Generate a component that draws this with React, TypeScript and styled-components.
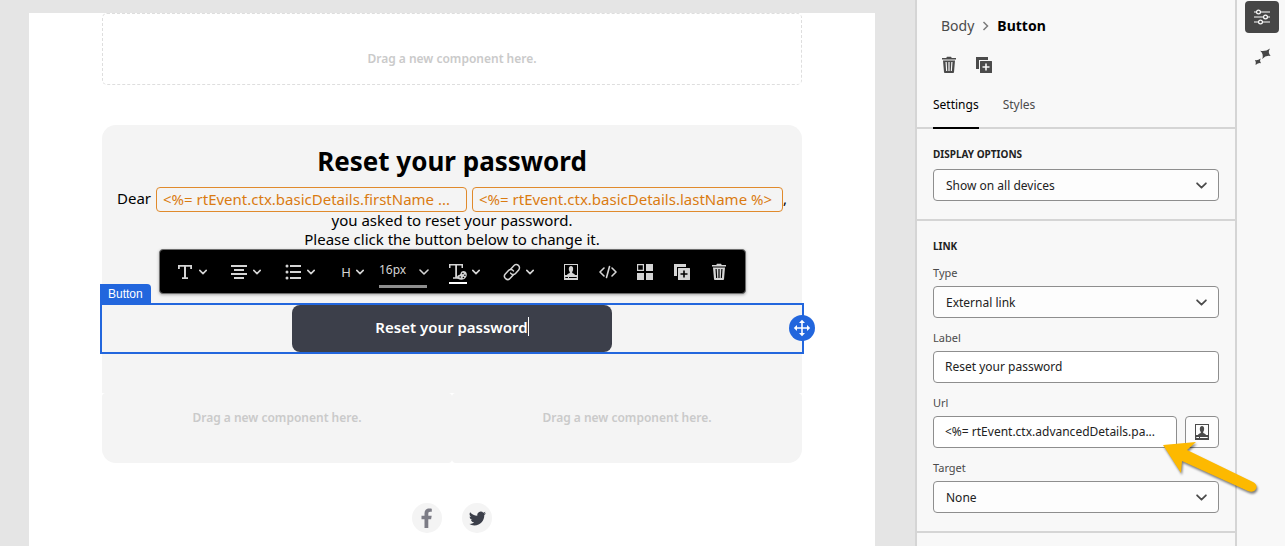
import React from 'react';
import styled, { createGlobalStyle, css } from 'styled-components';

const BLUE = '#2266dd';
const UI_FONT = '"Noto Sans", "Open Sans", sans-serif';

const GlobalStyle = createGlobalStyle`
  *, *::before, *::after { box-sizing: border-box; }
  body { margin: 0; background: #e6e6e6; font-family: ${UI_FONT}; }
  button, input, select { font-family: inherit; margin: 0; }
  h1, h2, p { margin: 0; }
`;

const Shell = styled.div`
  display: flex;
  height: 100vh;
  overflow: hidden;
`;

const Canvas = styled.main`
  flex: 1;
  min-width: 0;
  padding: 13px 40px 0 29px;
  background: #e5e5e5;
`;

const EmailPage = styled.div`
  display: flex;
  flex-direction: column;
  align-items: center;
  min-height: 100%;
  background: #fff;
`;

const EmailBody = styled.div`
  width: 100%;
  max-width: 700px;
`;

const placeholderText = css`
  display: flex;
  justify-content: center;
  font-size: 12px;
  line-height: 18px;
  font-weight: 600;
  color: #cacaca;
`;

const DropZone = styled.div`
  ${placeholderText}
  height: 72px;
  padding-top: 36px;
  border: 1px dashed #dedede;
  border-radius: 5px;
`;

const Card = styled.section`
  height: 268px;
  margin-top: 40px;
  padding-top: 18px;
  background: #f4f4f4;
  border-radius: 14px 14px 0 0;
  text-align: center;
  color: #000;
`;

const Title = styled.h1`
  font-size: 26px;
  line-height: 36px;
  font-weight: 700;
`;

const Greeting = styled.p`
  display: flex;
  justify-content: center;
  height: 24px;
  margin-top: 8px;
  font-size: 15px;
  line-height: 23px;
  white-space: nowrap;
`;

const Token = styled.span`
  width: 311px;
  height: 25px;
  margin-left: 5px;
  padding: 0 6px;
  border: 1px solid #e08a2c;
  border-radius: 4px;
  color: #da7b11;
  text-align: left;
`;

const BodyText = styled.p`
  font-size: 15px;
  line-height: 19px;
`;

const Selection = styled.div`
  position: relative;
  display: flex;
  justify-content: center;
  height: 51px;
  margin: 54px -2px 0;
  border: 2px solid ${BLUE};
`;

const SelectionTag = styled.span`
  position: absolute;
  left: -2px;
  bottom: 100%;
  height: 21px;
  padding: 0 8px;
  border-radius: 0 4px 0 0;
  background: ${BLUE};
  color: #fff;
  font: 12px/21px "Liberation Sans", Arial, sans-serif;
`;

const MoveHandle = styled.button`
  position: absolute;
  right: -13px;
  top: 10px;
  width: 26px;
  height: 26px;
  padding: 0;
  border: 0;
  border-radius: 50%;
  background: ${BLUE};
  color: #fff;
  svg { display: block; }
`;

const CtaButton = styled.button`
  display: flex;
  align-items: center;
  justify-content: center;
  width: 320px;
  padding: 0 0 4px;
  border: 0;
  border-radius: 8px;
  background: #3c3f4a;
  color: #fff;
  font-size: 15px;
  line-height: 20px;
  font-weight: 600;
`;

const Caret = styled.span`
  width: 1px;
  height: 19px;
  background: #fff;
`;

const Toolbar = styled.div`
  position: absolute;
  left: 57px;
  bottom: 58px;
  display: flex;
  align-items: center;
  width: 587px;
  height: 45px;
  padding: 0 16px;
  border: 1px solid #6e6e6e;
  border-radius: 4px;
  background: #000;
  box-shadow: 0 1px 3px rgba(0, 0, 0, 0.3);
  color: #d4d4d4;
`;

const ToolGroup = styled.div<{ $gap: number; $after?: number }>`
  display: flex;
  align-items: center;
  gap: ${p => p.$gap}px;
  margin-right: ${p => p.$after ?? 0}px;
`;

const Tool = styled.button`
  display: flex;
  align-items: center;
  gap: 5px;
  padding: 0;
  border: 0;
  background: none;
  color: inherit;
  font-size: 13px;
  line-height: 18px;
  svg { display: block; }
`;

const HeadingGlyph = styled.span`
  width: 13px;
  text-align: right;
`;

const SizeTool = styled(Tool)`
  justify-content: space-between;
  width: 50px;
  color: #d4d4d4;
  font-size: 12px;
  line-height: 28px;
  background: linear-gradient(#8e8e8e, #8e8e8e) 0 100% / 48px 3px no-repeat;
  span { padding-bottom: 4px; }
`;

const Columns = styled.div`
  display: grid;
  grid-template-columns: 1fr 1fr;
`;

const Column = styled.div<{ $side: 'left' | 'right' }>`
  ${placeholderText}
  height: 70px;
  padding-top: 16px;
  background: #f4f4f4;
  border-radius: ${p => (p.$side === 'left' ? '4px 4px 4px 14px' : '4px 4px 14px 4px')};
`;

const Social = styled.nav`
  display: flex;
  justify-content: center;
  gap: 20px;
  margin-top: 40px;
`;

const SocialLink = styled.a`
  display: grid;
  place-items: center;
  width: 30px;
  height: 30px;
  border-radius: 50%;
  background: #f4f4f4;
`;

const Panel = styled.aside`
  position: relative;
  flex: 0 0 322px;
  border: solid #d5d5d5;
  border-width: 0 2px;
  background: #f8f8f8;
  color: #222;
`;

const Breadcrumb = styled.nav`
  display: flex;
  align-items: center;
  gap: 8px;
  padding: 15px 24px 0;
  font-size: 14px;
  line-height: 22px;
  color: #4b4b4b;
  a { color: inherit; text-decoration: none; }
  svg { color: #7a7a7a; }
  strong { color: #000; font-weight: 700; }
`;

const Actions = styled.div`
  display: flex;
  gap: 17px;
  padding: 19px 23px 0;
`;

const IconButton = styled.button`
  padding: 0;
  border: 0;
  background: none;
  color: #4b4b4b;
  svg { display: block; }
`;

const Tabs = styled.div`
  display: flex;
  gap: 24px;
  height: 55px;
  padding: 0 16px;
  border-bottom: 2px solid #d5d5d5;
`;

const Tab = styled.button<{ $active?: boolean }>`
  height: 55px;
  padding: 8px 0 0;
  border: 0;
  border-bottom: 2px solid ${p => (p.$active ? '#000' : 'transparent')};
  background: none;
  font-size: 12px;
  line-height: 18px;
  color: ${p => (p.$active ? '#000' : '#4b4b4b')};
`;

const Section = styled.section`
  padding: 17px 16px 18px;
  border-bottom: 2px solid #d5d5d5;
  display: flex;
  flex-direction: column;
`;

const SectionTitle = styled.h2`
  font-size: 10px;
  line-height: 16px;
  font-weight: 700;
  margin-bottom: 7px;
`;

const Field = styled.div`
  display: flex;
  flex-direction: column;
  & + & { margin-top: 8px; }
`;

const FieldLabel = styled.label`
  padding-top: 4px;
  font-size: 11px;
  line-height: 16px;
  margin-bottom: 5px;
  color: #4b4b4b;
`;

const SelectWrap = styled.div`
  display: grid;
  align-items: center;
  > * { grid-area: 1 / 1; }
  svg { justify-self: end; margin-right: 12px; pointer-events: none; color: #4b4b4b; }
`;

const control = css`
  width: 100%;
  min-width: 0;
  height: 32px;
  padding: 0 12px;
  border: 1px solid #8e8e8e;
  border-radius: 4px;
  background: #fdfdfd;
  color: #222;
  font-size: 12px;
`;

const Select = styled.select`
  ${control}
  appearance: none;
`;

const Input = styled.input`
  ${control}
  padding: 0 11px 2px;
  background: #fff;
  text-overflow: ellipsis;
`;

const InputRow = styled.div`
  display: flex;
  gap: 8px;
`;

const SquareButton = styled(IconButton)`
  display: grid;
  place-items: center;
  flex: 0 0 34px;
  height: 32px;
  border: 1px solid #8e8e8e;
  border-radius: 4px;
  background: #fdfdfd;
`;

const Rail = styled.nav`
  display: flex;
  flex-direction: column;
  align-items: center;
  flex: 0 0 48px;
  gap: 8px;
  padding: 1px 0 0 2px;
  background: #f8f8f8;
`;

const RailButton = styled.button<{ $active?: boolean }>`
  display: grid;
  place-items: center;
  width: 34px;
  height: 32px;
  padding: 0;
  border: 0;
  border-radius: 4px;
  background: ${p => (p.$active ? '#464646' : 'none')};
  color: ${p => (p.$active ? '#fff' : '#464646')};
`;

const Pointer = styled.svg`
  position: absolute;
  left: 240px;
  top: 436px;
  z-index: 2;
  overflow: visible;
  pointer-events: none;
  filter: drop-shadow(1px 2px 1px rgba(0, 0, 0, 0.5));
`;

const Icon = ({ children, size = 18 }: { children: React.ReactNode; size?: number }) => (
  <svg width={size} height={size} viewBox="0 0 18 18" fill="currentColor" aria-hidden="true">{children}</svg>
);

const Chevron = ({ width = 8 }: { width?: number }) => (
  <svg width={width} height={width} viewBox="0 0 10 10" fill="none" stroke="currentColor" strokeWidth={width > 8 ? 1.6 : 2} strokeLinecap="round" strokeLinejoin="round" aria-hidden="true">
    <path d="M1 3l4 4 4-4" />
  </svg>
);

const TrashIcon = () => (
  <Icon>
    <path fillRule="evenodd" d="M6.500 2V1.400Q6.500.8 7.100.8h3.800q.6 0 .6.6V2H16v1.500H2V2zM3 4.500h12l-1 11.700q-.1.8-.9.8H4.900q-.8 0-.9-.8zM5.500 6l.6 9h1.100L6.700 6zM8.400 6v9h1.200V6zM11.300 6l-.5 9h1.100l.6-9z" />
  </Icon>
);

const DuplicateIcon = () => (
  <Icon>
    <path d="M1 1h12v3H4v9H1z" />
    <path fillRule="evenodd" d="M5.500 5h11q.5 0 .5.5v11q0 .5-.5.500h-11q-.5 0-.5-.5v-11q0-.5.5-.5zM10.200 7.500v2.700H7.500v1.600h2.700v2.700h1.600v-2.700h2.700v-1.600h-2.700V7.500z" />
  </Icon>
);

const PersonalizeIcon = () => (
  <Icon>
    <path fillRule="evenodd" d="M2 1h14v16H2zM3 2v10h2c.2-1.300 2-1.500 2.800-2V9C6.500 7.500 6.200 3 9 3s2.500 4.500 1.200 6v1c.8.5 2.600.7 2.800 2h2V2zM3.300 14v1H6v-1zM7 14v1h7.700v-1z" />
  </Icon>
);

const TextIcon = () => <Icon><path d="M2 2h14v4h-1.800V3.800h-4.200v10.400h2V16H6v-1.800h2V3.800H3.800V6H2z" /></Icon>;

const AlignIcon = () => <Icon><path d="M1 2h16v2H1zM4 6h10v2H4zM1 10h16v2H1zM4 14h10v2H4z" /></Icon>;

const ListIcon = () => (
  <Icon>
    <path d="M6 2h11v2H6zM6 8h11v2H6zM6 14h11v2H6z" />
    <circle cx="3" cy="3" r="1.500" /><circle cx="3" cy="9" r="1.500" /><circle cx="3" cy="15" r="1.500" />
  </Icon>
);

const ColorIcon = () => (
  <svg width="18" height="26" viewBox="0 0 18 26" fill="currentColor" aria-hidden="true">
    <path d="M0 5h14v4h-1.500V6.500H8v11.700h2v1.500H4v-1.500h2.200V6.500H1.500V9H0z" />
    <path fillRule="evenodd" d="M8 18c.2-2 1.800-2 3-2.600.8-.6.600-1.600 1.400-2.600 1.700-1.700 4.500-.8 5.200 1.400.9 3-1.300 6.500-5 6.600-2.500.1-4.700-.9-4.600-2.800zm3.200-.8a.8.8 0 100 1.600.8.8 0 000-1.600zm3.200.5a.8.8 0 100 1.600.8.8 0 000-1.600zm1.500-2.200a.8.8 0 100 1.600.8.8 0 000-1.600zm-2-1.800a.8.8 0 100 1.600.8.8 0 000-1.600z" />
    <path fill="#fff" d="M0 23h18v2H0z" />
  </svg>
);

const LinkIcon = () => (
  <svg width="18" height="18" viewBox="0 0 18 18" fill="none" stroke="currentColor" strokeWidth="1.500" strokeLinecap="round" aria-hidden="true">
    <path d="M7.600 6.300l3.200-3.600a3.200 3.200 0 014.900 4.200l-3.200 3.600a3.200 3.200 0 01-4.900-.4" />
    <path d="M10.400 11.700l-3.200 3.600a3.200 3.200 0 01-4.900-4.200l3.200-3.600a3.200 3.200 0 014.900.4" />
  </svg>
);

const CodeIcon = () => (
  <svg width="18" height="18" viewBox="0 0 18 18" fill="none" stroke="currentColor" strokeWidth="1.600" strokeLinecap="round" strokeLinejoin="round" aria-hidden="true">
    <path d="M5 5L1 9l4 4M13 5l4 4-4 4M10.500 3.500l-3 11" />
  </svg>
);

const BlocksIcon = () => (
  <Icon>
    <path fillRule="evenodd" d="M1 1h7v7H1zm1.200 1.200v4.600h4.600V2.200zM10 1h7v7h-7zM1 10h7v7H1zM10 10h7v7h-7z" />
  </Icon>
);

const MoveIcon = () => (
  <svg width="26" height="26" viewBox="0 0 26 26" fill="currentColor" aria-hidden="true">
    <path d="M12.200 8h1.600v4.200H18V10l3.200 3-3.200 3v-2.200h-4.200V18H16l-3 3.200-3-3.200h2.200v-4.200H8V16l-3.200-3L8 10v2.200h4.200V8H10l3-3.200L16 8z" />
  </svg>
);

const SlidersIcon = () => (
  <svg width="18" height="18" viewBox="0 0 18 18" fill="none" stroke="currentColor" strokeWidth="1.200" aria-hidden="true">
    <path d="M1 4h2.500M7.500 4H17M1 9h9.500M14.500 9H17M1 14h4.500M9.500 14H17" />
    <circle cx="5.500" cy="4" r="1.900" /><circle cx="12.500" cy="9" r="1.900" /><circle cx="7.500" cy="14" r="1.900" />
  </svg>
);

const SparkleIcon = () => (
  <Icon>
    <path d="M17 .6Q14.300 4.400 17.600 8Q13.200 6.600 9.200 11Q11 6.300 7.200 2.800Q12.200 4 17 .6z" />
    <path d="M7.600 10.600Q6.300 13 8 15.200Q5.600 14.400 2.600 17Q3.700 14.300 1.900 12Q4.800 12.600 7.600 10.600z" />
  </Icon>
);

const DropTool = ({ label, children }: { label: string; children: React.ReactNode }) => (
  <Tool type="button" aria-label={label}>{children}<Chevron /></Tool>
);

const SelectField = ({ id, label, options }: { id: string; label?: string; options: string[] }) => (
  <Field>
    {label && <FieldLabel htmlFor={id}>{label}</FieldLabel>}
    <SelectWrap>
      <Select id={id} aria-label={label ? undefined : 'Display options'}>
        {options.map(o => <option key={o}>{o}</option>)}
      </Select>
      <Chevron width={11} />
    </SelectWrap>
  </Field>
);

function FormattingToolbar() {
  return (
    <Toolbar role="toolbar" aria-label="Formatting">
      <ToolGroup $gap={23} $after={15}>
        <DropTool label="Text style"><TextIcon /></DropTool>
        <DropTool label="Alignment"><AlignIcon /></DropTool>
        <DropTool label="List"><ListIcon /></DropTool>
        <DropTool label="Heading"><HeadingGlyph>H</HeadingGlyph></DropTool>
      </ToolGroup>
      <ToolGroup $gap={20} $after={20}>
        <SizeTool type="button" aria-label="Font size"><span>16px</span><Chevron width={10} /></SizeTool>
      </ToolGroup>
      <ToolGroup $gap={23} $after={28}>
        <DropTool label="Font color"><ColorIcon /></DropTool>
        <DropTool label="Insert link"><LinkIcon /></DropTool>
      </ToolGroup>
      <ToolGroup $gap={19}>
        <Tool type="button" aria-label="Add personalization"><PersonalizeIcon /></Tool>
        <Tool type="button" aria-label="Source code"><CodeIcon /></Tool>
        <Tool type="button" aria-label="Conditional content"><BlocksIcon /></Tool>
        <Tool type="button" aria-label="Duplicate"><DuplicateIcon /></Tool>
        <Tool type="button" aria-label="Delete"><TrashIcon /></Tool>
      </ToolGroup>
    </Toolbar>
  );
}

export default function App() {
  return (
    <>
      <GlobalStyle />
      <Shell>
        <Canvas>
          <EmailPage>
            <EmailBody>
              <DropZone>Drag a new component here.</DropZone>
              <Card>
                <Title>Reset your password</Title>
                <Greeting>
                  Dear
                  <Token>&lt;%= rtEvent.ctx.basicDetails.firstName ...</Token>
                  <Token>&lt;%= rtEvent.ctx.basicDetails.lastName %&gt;</Token>,
                </Greeting>
                <BodyText>you asked to reset your password.</BodyText>
                <BodyText>Please click the button below to change it.</BodyText>
                <Selection>
                  <SelectionTag>Button</SelectionTag>
                  <FormattingToolbar />
                  <CtaButton type="button">Reset your password<Caret /></CtaButton>
                  <MoveHandle type="button" aria-label="Move"><MoveIcon /></MoveHandle>
                </Selection>
              </Card>
              <Columns>
                <Column $side="left">Drag a new component here.</Column>
                <Column $side="right">Drag a new component here.</Column>
              </Columns>
              <Social>
                <SocialLink href="#facebook" aria-label="Facebook">
                  <svg width="12" height="20" viewBox="0 0 12 20" fill="#7c7c86" aria-hidden="true">
                    <path d="M3.500 20v-8.800H.5V7.800h3V5.200C3.500 2.100 5.300.5 8 .5c1.300 0 2.800.2 2.800.2v3.100H9.200c-1.500 0-1.900.9-1.900 1.900v2.100h3.400l-.6 3.400H7.300V20z" />
                  </svg>
                </SocialLink>
                <SocialLink href="#twitter" aria-label="Twitter">
                  <svg width="17" height="17" viewBox="0 0 24 24" fill="#3c3f4a" aria-hidden="true">
                    <path d="M23.950 4.570a10 10 0 01-2.820.77 4.960 4.960 0 002.160-2.720 9.900 9.900 0 01-3.120 1.190 4.920 4.920 0 00-8.380 4.480A13.930 13.930 0 011.640 3.160a4.920 4.920 0 001.520 6.570 4.900 4.900 0 01-2.230-.61v.06a4.920 4.920 0 003.950 4.830 5 5 0 01-2.210.08 4.940 4.940 0 004.600 3.420A9.870 9.870 0 010 19.540a13.990 13.990 0 007.550 2.210c9.140 0 14.300-7.720 14.020-14.640a9.940 9.940 0 002.380-2.540z" />
                  </svg>
                </SocialLink>
              </Social>
            </EmailBody>
          </EmailPage>
        </Canvas>

        <Panel>
          <Breadcrumb aria-label="Breadcrumb">
            <a href="#body">Body</a>
            <svg width="7" height="10" viewBox="0 0 7 10" fill="none" stroke="currentColor" strokeWidth="1.500" aria-hidden="true"><path d="M1.500 1l4 4-4 4" /></svg>
            <strong>Button</strong>
          </Breadcrumb>
          <Actions>
            <IconButton type="button" aria-label="Delete component"><TrashIcon /></IconButton>
            <IconButton type="button" aria-label="Duplicate component"><DuplicateIcon /></IconButton>
          </Actions>
          <Tabs role="tablist">
            <Tab type="button" role="tab" aria-selected="true" $active>Settings</Tab>
            <Tab type="button" role="tab" aria-selected="false">Styles</Tab>
          </Tabs>
          <Section>
            <SectionTitle>DISPLAY OPTIONS</SectionTitle>
            <SelectField id="display" options={['Show on all devices']} />
          </Section>
          <Section>
            <SectionTitle>LINK</SectionTitle>
            <SelectField id="type" label="Type" options={['External link']} />
            <Field>
              <FieldLabel htmlFor="label">Label</FieldLabel>
              <Input id="label" defaultValue="Reset your password" />
            </Field>
            <Field>
              <FieldLabel htmlFor="url">Url</FieldLabel>
              <InputRow>
                <Input id="url" defaultValue="<%= rtEvent.ctx.advancedDetails.pa..." />
                <SquareButton type="button" aria-label="Personalize url"><PersonalizeIcon /></SquareButton>
              </InputRow>
            </Field>
            <SelectField id="target" label="Target" options={['None']} />
          </Section>
          <Pointer width="100" height="60" viewBox="1157 436 100 60" aria-hidden="true">
            <path fill="#fdb900" d="M1163 445l33-3-9 8 66 32q5 3 3 7-2 4-8 2l-66-30-1 12z" />
          </Pointer>
        </Panel>

        <Rail aria-label="Panels">
          <RailButton type="button" aria-label="Properties" $active><SlidersIcon /></RailButton>
          <RailButton type="button" aria-label="Assistant"><SparkleIcon /></RailButton>
        </Rail>
      </Shell>
    </>
  );
}
